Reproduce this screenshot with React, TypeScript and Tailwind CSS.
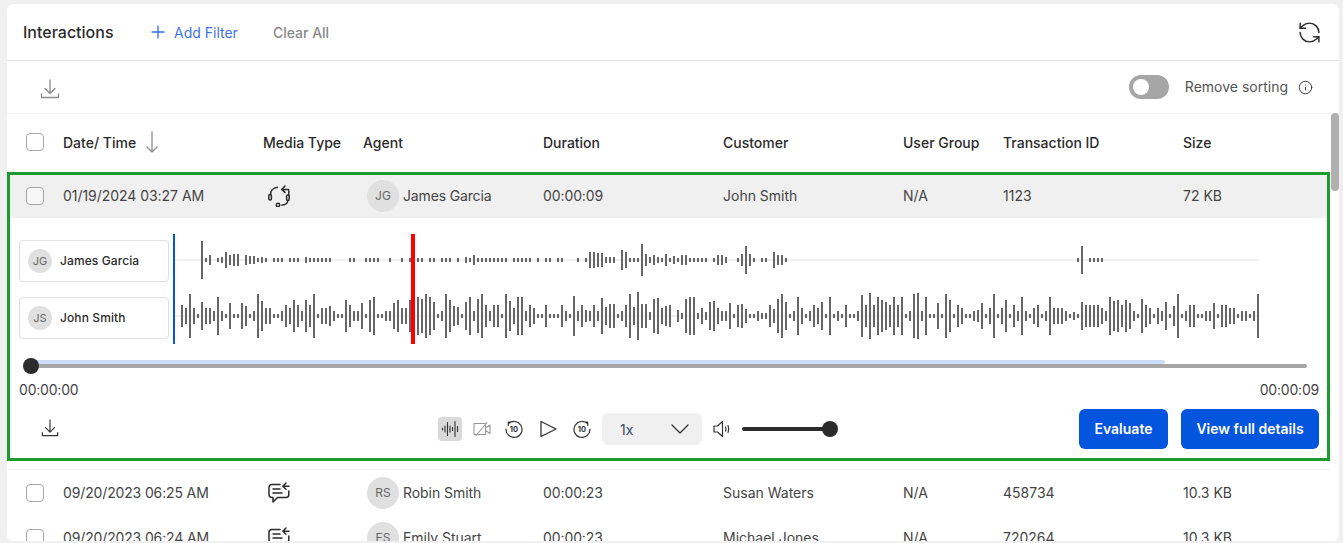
import { Info, RefreshCcw } from "lucide-react";

// waveform heights in px, one bar every 4px, 0 = no bar
const agentWave = [
  0, 0, 0, 0, 0, 38, 4, 10, 0, 4, 6, 16, 10, 12, 12, 0, 10, 8, 8, 4,
  6, 4, 0, 4, 4, 4, 0, 4, 4, 4, 0, 6, 4, 4, 4, 4, 4, 4, 0, 0,
  0, 0, 4, 4, 0, 0, 4, 4, 4, 4, 0, 0, 4, 0, 0, 4, 0, 4, 4, 4,
  4, 0, 4, 4, 0, 4, 4, 4, 0, 4, 0, 6, 4, 10, 4, 4, 4, 4, 4, 4,
  4, 4, 0, 4, 4, 4, 4, 4, 0, 4, 0, 4, 4, 0, 4, 4, 0, 0, 0, 4,
  0, 4, 16, 16, 14, 14, 6, 6, 6, 0, 20, 16, 4, 4, 4, 32, 12, 6, 10, 6,
  4, 12, 4, 8, 4, 10, 10, 4, 4, 4, 4, 4, 0, 4, 10, 10, 6, 0, 0, 4,
  12, 28, 12, 4, 0, 4, 4, 0, 16, 10, 10, 4,
  ...Array(72).fill(0),
  4, 28, 0, 4, 4, 4, 4,
];

const customerWave = [
  22, 16, 44, 16, 4, 28, 16, 16, 10, 38, 10, 4, 26, 4, 4, 26, 20, 4, 10, 44,
  30, 16, 16, 4, 4, 10, 22, 16, 32, 22, 10, 32, 22, 44, 4, 16, 16, 20, 10, 4,
  4, 32, 22, 10, 10, 26, 4, 32, 38, 4, 4, 10, 10, 26, 32, 16, 16, 32, 10, 38,
  34, 44, 38, 28, 4, 10, 44, 32, 20, 18, 4, 28, 38, 10, 34, 44, 22, 10, 22, 22,
  4, 44, 30, 16, 38, 38, 10, 22, 16, 4, 4, 22, 4, 4, 4, 22, 10, 4, 40, 10,
  22, 12, 10, 22, 10, 36, 18, 24, 24, 4, 10, 22, 44, 18, 48, 24, 24, 8, 34, 36,
  16, 20, 22, 0, 12, 6, 34, 38, 38, 6, 16, 8, 28, 30, 16, 10, 10, 26, 4, 22,
  24, 14, 4, 4, 10, 6, 6, 22, 14, 34, 44, 28, 4, 10, 38, 16, 4, 10, 22, 16,
  28, 4, 38, 4, 10, 4, 22, 4, 4, 10, 42, 22, 46,
  22, 38, 32, 28, 22, 38, 22, 38, 4, 10, 44, 46, 10, 38, 4, 4, 26, 4, 44, 32,
  4, 22, 16, 4, 4, 10, 12, 26, 4, 16, 44, 4, 16, 32, 4, 22, 10, 38, 10, 4,
  16, 22, 4, 10, 38, 16, 16, 16, 10, 4, 8, 4, 28, 22, 22, 22, 22, 16, 10, 38,
  30, 32, 22, 32, 26, 10, 4, 34, 22, 16, 4, 16, 10, 28, 4, 20, 44, 4, 10, 22,
  22, 4, 4, 10, 10, 26, 4, 22, 22, 16, 16, 4, 10, 10, 4, 10, 44,
];

function DownloadIcon({ className }: { className?: string }) {
  return (
    <svg className={className} viewBox="0 0 20 20" fill="none" stroke="currentColor" strokeWidth="1.3" aria-hidden="true">
      <path d="M10 1v13M5 9.5l5 5 5-5M1.5 15v3.5h17V15" strokeLinecap="round" strokeLinejoin="round" />
    </svg>
  );
}

function HeadsetIcon() {
  return (
    <svg className="h-[22px] w-[22px]" viewBox="0 0 22 22" fill="none" stroke="#2b2b2b" strokeWidth="1.5" strokeLinecap="round" strokeLinejoin="round" aria-hidden="true">
      <path d="M2.500 9.500C2.500 6 5 2.800 9.500 2.300" />
      <rect x="0.800" y="9.500" width="2.600" height="5.500" rx="1.200" />
      <path d="M17 1l-3.200 3.400 3.200 3" />
      <path d="M14 4.400h6.500c.5 2 .5 4 .2 5.600" />
      <rect x="18.600" y="10" width="2.600" height="5.500" rx="1.200" />
      <path d="M19.800 15.500c0 3-3 4.500-6 4.500" />
      <circle cx="10" cy="20" r="1.700" />
    </svg>
  );
}

function ChatIcon() {
  return (
    <svg className="h-[22px] w-[22px]" viewBox="0 0 22 22" fill="none" stroke="#2b2b2b" strokeWidth="1.500" strokeLinecap="round" strokeLinejoin="round" aria-hidden="true">
      <path d="M12 2.500H4C2 2.500 1 3.800 1 5.500v7c0 1.700 1 3 3 3h1v4.500l4.500-4.500H18c2 0 2.800-1.300 2.800-3V9" />
      <path d="M5 7h7M5 11h9" />
      <path d="M18 1l-3.200 3.200 3.200 3M15 4.200h6" />
    </svg>
  );
}

function WaveIcon() {
  return (
    <svg className="h-[18px] w-[18px]" viewBox="0 0 18 18" stroke="#333" strokeWidth="1.100" strokeLinecap="round" aria-hidden="true">
      <path d="M1.500 8v2M4 6v6M6.500 2.500v13M9 6v6M11.500 7.500v3M14 1.500v15M16.500 6.500v5" />
    </svg>
  );
}

function VideoOffIcon() {
  return (
    <svg className="h-[18px] w-[18px]" viewBox="0 0 18 18" fill="none" stroke="#999" strokeWidth="1.100" strokeLinejoin="round" aria-hidden="true">
      <path d="M12.500 3.500H1v11h11.500zM12.500 8l4.500-3v8.500l-4.500-3" />
      <path d="M14 2.500L3 15.500" strokeLinecap="round" />
    </svg>
  );
}

function SkipIcon({ forward }: { forward?: boolean }) {
  return (
    <svg className="h-[18px] w-[18px]" viewBox="0 0 18 18" fill="none" stroke="#333" strokeWidth="1.200" strokeLinecap="round" strokeLinejoin="round" aria-hidden="true">
      {forward ? (
        <path d="M14.700 3.800A8 8 0 1 0 17 9M11 2h3.700v3.500" />
      ) : (
        <path d="M3.300 3.800A8 8 0 1 1 1 9M7 2H3.300v3.500" />
      )}
      <text x="9" y="12" textAnchor="middle" fontSize="7.500" fontWeight="700" fill="#333" stroke="none" fontFamily="Inter, sans-serif">
        10
      </text>
    </svg>
  );
}

function PlayIcon() {
  return (
    <svg className="h-[18px] w-[17px]" viewBox="0 0 17 18" fill="none" stroke="#333" strokeWidth="1.300" strokeLinejoin="round" aria-hidden="true">
      <path d="M1 1.500v15L16 9z" />
    </svg>
  );
}

function VolumeIcon() {
  return (
    <svg className="h-[18px] w-[18px]" viewBox="0 0 18 18" fill="none" stroke="#333" strokeWidth="1.200" strokeLinecap="round" strokeLinejoin="round" aria-hidden="true">
      <path d="M1 6v6h3.500L9.500 16.500v-15L4.500 6zM12.500 7c.7 1.300.7 2.700 0 4M15 5.500c1 2.300 1 4.700 0 7" />
    </svg>
  );
}

function Checkbox() {
  return <span className="block h-[18px] w-[18px] rounded-[4px] border border-[#a6a6a6] bg-white/40" />;
}

function Avatar({ initials, small }: { initials: string; small?: boolean }) {
  return (
    <span
      className={
        small
          ? "flex h-[24px] w-[24px] items-center justify-center rounded-full bg-[#e0e0e0] text-[11px] text-[#666]"
          : "flex h-[32px] w-[32px] items-center justify-center rounded-full bg-[#e0e0e0] text-[12px] text-[#666]"
      }
    >
      {initials}
    </span>
  );
}

interface RowData {
  date: string;
  icon: React.ReactNode;
  initials: string;
  agent: string;
  duration: string;
  customer: string;
  group: string;
  id: string;
  size: string;
}

function RowCells({ row, open }: { row: RowData; open?: boolean }) {
  return (
    <>
      <span className={open ? "tracking-[-0.04px]" : "tracking-[-0.14px]"}>{row.date}</span>
      <span className="pl-[5px]">{row.icon}</span>
      <span className="flex items-center gap-[4px] pl-[4px]">
        <Avatar initials={row.initials} />
        <span className={open ? "tracking-[-0.15px]" : "tracking-[-0.05px]"}>{row.agent}</span>
      </span>
      <span className="tracking-[-0.1px]">{row.duration}</span>
      <span>{row.customer}</span>
      <span>{row.group}</span>
      <span>{row.id}</span>
      <span>{row.size}</span>
    </>
  );
}

function Waveform() {
  return (
    <svg className="h-[110px] w-[1087px] shrink-0" viewBox="0 0 1087 110" aria-hidden="true">
      <rect x="2" y="25" width="1084" height="2" fill="#f0f0f0" />
      <rect x="2" y="81" width="1084" height="2" fill="#f0f0f0" />
      {agentWave.map((h, i) =>
        h > 0 ? <rect key={"a" + i} x={8 + 4 * i} y={26 - h / 2} width="2" height={h} fill="#666" /> : null
      )}
      {customerWave.map((h, i) =>
        h > 0 ? <rect key={"c" + i} x={8 + 4 * i} y={82 - h / 2} width="2" height={h} fill="#666" /> : null
      )}
      <rect x="0" y="0" width="2" height="110" fill="#0455dd" />
      <rect x="238" y="0" width="4" height="110" fill="#ff0000" />
    </svg>
  );
}

function SpeakerCard({ initials, name }: { initials: string; name: string }) {
  return (
    <div className="flex h-[42px] w-[150px] items-center gap-[8px] rounded-[4px] border border-[#e0e0e0] pl-[8px]">
      <Avatar initials={initials} small />
      <span className="text-[12px] font-medium tracking-[0.1px] text-[#2b2b2b]">{name}</span>
    </div>
  );
}

const rows: RowData[] = [
  { date: "09/20/2023 06:25 AM", icon: <ChatIcon />, initials: "RS", agent: "Robin Smith", duration: "00:00:23", customer: "Susan Waters", group: "N/A", id: "458734", size: "10.3 KB" },
  { date: "09/20/2023 06:24 AM", icon: <ChatIcon />, initials: "ES", agent: "Emily Stuart", duration: "00:00:23", customer: "Michael Jones", group: "N/A", id: "720264", size: "10.3 KB" },
];

const expanded: RowData = {
  date: "01/19/2024 03:27 AM",
  icon: <HeadsetIcon />,
  initials: "JG",
  agent: "James Garcia",
  duration: "00:00:09",
  customer: "John Smith",
  group: "N/A",
  id: "1123",
  size: "72 KB",
};

export default function App() {
  return (
    <div className="h-[543px] w-[1343px] overflow-hidden bg-[#f0f0f0] pl-[7px] pt-[4px] font-['Inter',sans-serif] text-[14px] text-[#444]">
      <div className="relative h-[537px] w-[1332px] overflow-hidden rounded-[6px] bg-white">
        {/* Top bar */}
        <header className="flex h-[57px] items-center border-b border-[#e4e4e4] pl-[16px] pr-[17px]">
          <h1 className="w-[128px] text-[16px] font-medium text-[#2b2b2b]">Interactions</h1>
          <svg className="h-[14px] w-[14px]" viewBox="0 0 14 14" stroke="#2f6be0" strokeWidth="1.300" strokeLinecap="round" aria-hidden="true">
            <path d="M7 1v12M1 7h12" />
          </svg>
          <span className="ml-[9px] text-[#3f73e3]">Add Filter</span>
          <span className="ml-[35px] font-medium text-[#8a8a8a]">Clear All</span>
          <RefreshCcw className="ml-auto h-[25px] w-[25px] text-[#2b2b2b]" strokeWidth={1.4} />
        </header>

        {/* Toolbar */}
        <div className="flex h-[53px] items-center border-b border-[#f0f0f0] pl-[33px] pr-[26px]">
          <DownloadIcon className="mt-[4px] h-[20px] w-[20px] text-[#8a8a8a]" />
          <span className="ml-auto flex h-[24px] w-[40px] items-center rounded-full bg-[#a6a6a6] pl-[4px]">
            <span className="h-[16px] w-[16px] rounded-full bg-white" />
          </span>
          <span className="mb-[2px] ml-[16px] text-[#555]">Remove sorting</span>
          <Info className="ml-[10px] h-[15px] w-[15px] text-[#333]" strokeWidth={1.5} />
        </div>

        {/* Column headers */}
        <div className="grid h-[58px] grid-cols-[56px_200px_100px_180px_180px_180px_100px_180px_1fr] items-center pb-[2px] font-medium text-[#2b2b2b]">
          <span className="pl-[19px]">
            <Checkbox />
          </span>
          <span className="flex items-center gap-[10px]">
            Date/ Time
            <svg className="h-[22px] w-[12px]" viewBox="0 0 12 22" fill="none" stroke="#8a8a8a" strokeWidth="1.300" strokeLinecap="round" strokeLinejoin="round" aria-hidden="true">
              <path d="M6 1v20M1 16l5 5 5-5" />
            </svg>
          </span>
          <span>Media Type</span>
          <span>Agent</span>
          <span>Duration</span>
          <span>Customer</span>
          <span>User Group</span>
          <span>Transaction ID</span>
          <span>Size</span>
        </div>

        {/* Expanded row, framed */}
        <div className="w-[1323px] border-[3px] border-[#1a9c2e]">
          <div className="grid h-[43px] grid-cols-[53px_200px_100px_180px_180px_180px_100px_180px_1fr] items-center bg-[#f0f0f0] pb-[2px]">
            <span className="pl-[16px]">
              <Checkbox />
            </span>
            <RowCells row={expanded} open />
          </div>
          <div className="h-[240px] pl-[9px] pt-[16px]">
            <div className="flex h-[110px] gap-[4px]">
              <div className="flex flex-col gap-[15px] pt-[6px]">
                <SpeakerCard initials="JG" name="James Garcia" />
                <SpeakerCard initials="JS" name="John Smith" />
              </div>
              <Waveform />
            </div>

            {/* Scrubber */}
            <div className="relative mt-[14px] h-[16px] w-[1288px]">
              <div className="absolute left-[12px] top-[2px] h-[4px] w-[1134px] rounded-r-full bg-[#cddcf7]" />
              <div className="absolute left-[12px] right-0 top-[6px] h-[4px] rounded-r-full bg-[#a6a6a6]" />
              <div className="absolute left-[4px] top-0 h-[16px] w-[16px] rounded-full bg-[#2b2b2b]" />
            </div>

            <div className="mt-[5px] flex h-[20px] items-center justify-between pr-[8px] tracking-[-0.2px]">
              <span>00:00:00</span>
              <span>00:00:09</span>
            </div>

            {/* Player controls */}
            <div className="mt-[10px] flex h-[40px] items-center pr-[8px]">
              <DownloadIcon className="mb-[3px] ml-[22px] h-[18px] w-[18px] text-[#333]" />
              <span className="ml-[379px] flex h-[24px] w-[24px] items-center justify-center rounded-[4px] bg-[#d9d9d9]">
                <WaveIcon />
              </span>
              <span className="ml-[11px]">
                <VideoOffIcon />
              </span>
              <span className="ml-[14px]">
                <SkipIcon />
              </span>
              <span className="ml-[17px]">
                <PlayIcon />
              </span>
              <span className="ml-[16px]">
                <SkipIcon forward />
              </span>
              <span className="ml-[11px] flex h-[32px] w-[100px] items-center justify-between rounded-[6px] bg-[#f0f0f0] pl-[18px] pr-[13px] text-[#3a4a66]">
                1x
                <svg className="h-[10px] w-[18px]" viewBox="0 0 18 10" fill="none" stroke="#333" strokeWidth="1.300" strokeLinecap="round" strokeLinejoin="round" aria-hidden="true">
                  <path d="M1 1l8 8 8-8" />
                </svg>
              </span>
              <span className="ml-[11px]">
                <VolumeIcon />
              </span>
              <span className="relative ml-[11px] flex h-[16px] w-[96px] items-center">
                <span className="h-[4px] w-[88px] rounded-full bg-[#2b2b2b]" />
                <span className="absolute right-0 h-[16px] w-[16px] rounded-full bg-[#2b2b2b]" />
              </span>
              <button className="ml-auto h-[40px] w-[89px] rounded-[6px] bg-[#0455dd] pb-[2px] font-semibold text-white">Evaluate</button>
              <button className="ml-[13px] h-[40px] w-[138px] rounded-[6px] bg-[#0455dd] pb-[2px] font-semibold text-white">View full details</button>
            </div>
          </div>
        </div>

        <div className="h-[9px] w-[1323px] border-b border-[#f4f4f4]" />

        {rows.map((row) => (
          <div key={row.id} className="grid h-[45px] grid-cols-[56px_200px_100px_180px_180px_180px_100px_180px_1fr] items-center">
            <span className="pl-[19px]">
              <Checkbox />
            </span>
            <RowCells row={row} />
          </div>
        ))}

        {/* Scrollbar thumb */}
        <div className="absolute left-[1324px] top-[109px] h-[78px] w-[8px] rounded-full bg-[#b0b0b0]" />
      </div>
    </div>
  );
}
